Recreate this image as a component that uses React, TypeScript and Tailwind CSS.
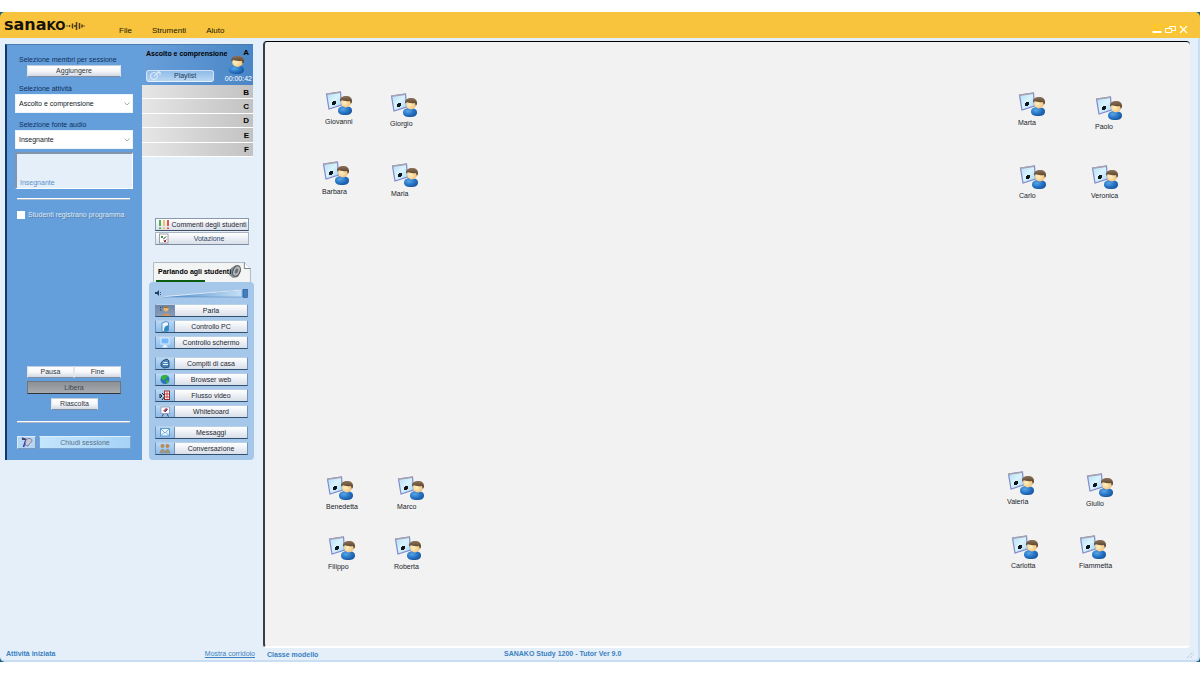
import { useState, type ReactNode } from "react";

const students = [
  { name: "Giovanni", x: 60, y: 49 },
  { name: "Giorgio", x: 125, y: 51 },
  { name: "Barbara", x: 57, y: 119 },
  { name: "Maria", x: 126, y: 121 },
  { name: "Marta", x: 753, y: 50 },
  { name: "Paolo", x: 830, y: 54 },
  { name: "Carlo", x: 754, y: 123 },
  { name: "Veronica", x: 826, y: 123 },
  { name: "Benedetta", x: 61, y: 434 },
  { name: "Marco", x: 132, y: 434 },
  { name: "Filippo", x: 63, y: 494 },
  { name: "Roberta", x: 129, y: 494 },
  { name: "Valeria", x: 742, y: 429 },
  { name: "Giulio", x: 821, y: 431 },
  { name: "Carlotta", x: 746, y: 493 },
  { name: "Fiammetta", x: 814, y: 493 },
];

const glossy =
  "bg-linear-to-b from-white via-[#f6f7fa] to-[#d3d8e2] border border-t-[#c3cedd] border-x-[#dfe6ef] border-b-[#7d8ba3] text-[#2e3440]";

function Defs() {
  return (
    <svg className="absolute size-0" aria-hidden="true">
      <defs>
        <linearGradient id="screen" x1="0" y1="0" x2="1" y2="1">
          <stop offset="0" stopColor="#b4dcf5" />
          <stop offset="0.5" stopColor="#d8f3fd" />
          <stop offset="1" stopColor="#a5d3f2" />
        </linearGradient>
        <radialGradient id="shirt" cx="0.35" cy="0.35" r="0.75">
          <stop offset="0" stopColor="#5aa6e6" />
          <stop offset="0.5" stopColor="#2a78c8" />
          <stop offset="1" stopColor="#155099" />
        </radialGradient>
        <radialGradient id="face" cx="0.35" cy="0.5" r="0.7">
          <stop offset="0" stopColor="#fff0bd" />
          <stop offset="1" stopColor="#eebb78" />
        </radialGradient>
        <linearGradient id="hair" x1="0" y1="0" x2="0" y2="1">
          <stop offset="0" stopColor="#8d7358" />
          <stop offset="1" stopColor="#4b3420" />
        </linearGradient>
        <linearGradient id="slope" x1="0" y1="0" x2="1" y2="0">
          <stop offset="0" stopColor="#4a8ccd" />
          <stop offset="1" stopColor="#c6dff5" />
        </linearGradient>
      </defs>
    </svg>
  );
}

function Person() {
  return (
    <g>
      <path d="M0 14.500C0 11.500 2.500 10 7 10S14 11.500 14 14.500C14 17.800 11.500 19 7 19S0 17.800 0 14.500Z" fill="url(#shirt)" />
      <ellipse cx="8" cy="6.800" rx="5" ry="4.700" fill="url(#face)" />
      <path d="M2 4.500C2 1.500 4.500 0 8 0C12 0 14.300 2 14 5.500C13.900 6.800 13.300 7.500 12.800 7.800L12 5C8.500 5.500 5.500 5 3.800 4L2.500 5.500Z" fill="url(#hair)" />
    </g>
  );
}

function StudentIcon() {
  return (
    <svg width="28" height="26" viewBox="0 0 28 26" aria-hidden="true">
      <path d="M1.500 3L15.500 1L16.500 14L4 18Z" fill="url(#screen)" stroke="#8189cb" strokeWidth="1.200" />
      <path d="M1.200 3.200L15.500 1.200" stroke="#a6a3b0" strokeWidth="1.500" />
      <path d="M7 11h1V10h3v3h-1v1H7z" fill="#10151c" />
      <g transform="translate(13 5)">
        <Person />
      </g>
    </svg>
  );
}

function Glyph({ children }: { children: ReactNode }) {
  return (
    <svg width="12" height="11" viewBox="0 0 12 11" fill="none" aria-hidden="true">
      {children}
    </svg>
  );
}

const talkGlyph = (
  <Glyph>
    <path d="M1 2l1 1M3.500 1.500l.5 1M1 5h1.500" stroke="#26384f" />
    <circle cx="7" cy="4" r="2.500" fill="#e9b56b" />
    <path d="M3.500 11C4 7.500 10 7.500 11 11Z" fill="#d4945a" />
    <path d="M5 3C5 .5 9 .5 9.500 3Z" fill="#a8682b" />
  </Glyph>
);
const pcGlyph = (
  <Glyph>
    <path d="M3 2l4-1.500 2.500 1v8L6 11l-3-1z" fill="#e8f6ff" stroke="#3f7fb4" strokeWidth=".8" />
    <path d="M5 9.500C5 6 6.500 5 9.500 4v5.500L6 11z" fill="#3186c4" />
  </Glyph>
);
const screenGlyph = (
  <Glyph>
    <rect x="2" y="1" width="8" height="6" fill="#74b7ff" stroke="#d9efff" />
    <path d="M5 8h2l2 2.500H3z" fill="#e8f5ff" />
  </Glyph>
);
const homeworkGlyph = (
  <Glyph>
    <path d="M4 2.500L8 1l2 2v6L5 10 2 8V5z" fill="#4c88bd" stroke="#173a60" strokeWidth=".8" />
    <path d="M4.500 4.500h4M4 6.500h5" stroke="#e9f5ff" />
  </Glyph>
);
const globeGlyph = (
  <Glyph>
    <circle cx="6" cy="5.500" r="4.500" fill="#2c73b9" />
    <path d="M3 2C5 .5 8 1 9 2.500L7 4 6 6 3 5.500 2 4ZM6.500 7l3-1c.5 1-.5 3-2 3.800z" fill="#31b534" />
  </Glyph>
);
const videoGlyph = (
  <Glyph>
    <path d="M1 4v4l2-2zM3 3l3 3-3 4" stroke="#20242c" />
    <rect x="5.500" y="1" width="5" height="8.500" fill="#fff" stroke="#9a2b2b" />
    <path d="M8 1.500v7M6 4h4M6 7h4" stroke="#b94646" />
  </Glyph>
);
const boardGlyph = (
  <Glyph>
    <rect x="2" y="1" width="8.500" height="6.500" fill="#fff" stroke="#8c96ad" strokeWidth=".8" />
    <path d="M4 5l3-3 2 1-3 3z" fill="#c93645" />
    <path d="M6 6l2.500-2.500" stroke="#244bac" />
    <path d="M4.500 8L3 10.500M8 8l1.500 2.500" stroke="#434b60" />
  </Glyph>
);
const mailGlyph = (
  <Glyph>
    <rect x="1.500" y="1.500" width="9" height="7.500" fill="#e8f6ff" stroke="#5e9bcb" />
    <path d="M2 2l4 4 4-4M2 8.500l3-3M10 8.500l-3-3" stroke="#5e9bcb" strokeWidth=".8" />
  </Glyph>
);
const chatGlyph = (
  <Glyph>
    <circle cx="3.500" cy="3" r="2" fill="#b98b58" />
    <circle cx="8.500" cy="3" r="2" fill="#b98b58" />
    <path d="M1 10C1 5 6 5 6 10ZM6 10C6 5 11 5 11 10Z" fill="#ad946f" stroke="#6f93b5" strokeWidth=".5" />
  </Glyph>
);

const toolGroups = [
  [
    { label: "Parla", icon: talkGlyph, active: true },
    { label: "Controllo PC", icon: pcGlyph },
    { label: "Controllo schermo", icon: screenGlyph },
  ],
  [
    { label: "Compiti di casa", icon: homeworkGlyph },
    { label: "Browser web", icon: globeGlyph },
    { label: "Flusso video", icon: videoGlyph },
    { label: "Whiteboard", icon: boardGlyph },
  ],
  [
    { label: "Messaggi", icon: mailGlyph },
    { label: "Conversazione", icon: chatGlyph },
  ],
];

function ToolButton({ label, icon, active }: { label: string; icon: ReactNode; active?: boolean }) {
  return (
    <button className="flex h-[13px] w-full border border-t-[#b9cfe8] border-x-[#6f93bb] border-b-[#33506f] text-[#1f2733]">
      <span
        className={
          active
            ? "flex h-full w-[18px] items-center justify-center bg-linear-to-b from-[#6a87ab] to-[#8d9cb2]"
            : "flex h-full w-[18px] items-center justify-center bg-linear-to-b from-[#b9d8f5] to-[#8fbce8]"
        }
      >
        {icon}
      </span>
      <span className="flex h-full flex-1 items-center justify-center border-l border-[#7393b8] bg-linear-to-b from-white to-[#d9dfe9] whitespace-nowrap">
        {label}
      </span>
    </button>
  );
}

function Picker({ id, label, options }: { id: string; label: string; options: string[] }) {
  return (
    <div className="flex flex-col">
      <label htmlFor={id} className="ml-1 text-[#0f2f5c]">
        {label}
      </label>
      <div className="relative mt-px">
        <select id={id} className="h-[19px] w-full appearance-none border border-[#eef4fb] bg-white pl-[3px] text-[#15181d]">
          {options.map((o) => (
            <option key={o}>{o}</option>
          ))}
        </select>
        <svg className="pointer-events-none absolute top-2 right-[3px]" width="6" height="4" viewBox="0 0 6 4" fill="none" aria-hidden="true">
          <path d="M.5.5L3 3 5.500.5" stroke="#9a9a9a" strokeWidth=".8" />
        </svg>
      </div>
    </div>
  );
}

function Divider() {
  return <hr className="mr-[3px] ml-[2px] h-[2px] border-0 border-b border-[#a9b9c9] bg-white" />;
}

function SessionPanel() {
  const [record, setRecord] = useState(false);
  return (
    <section className="flex w-[137px] shrink-0 flex-col border-t border-l-2 border-t-[#4c7cb0] border-l-[#12386b] bg-[#659fdb] pt-[11px] pr-[9px] pb-[11px] pl-2">
      <div className="ml-1 text-[#0f2f5c]">Selezione membri per sessione</div>
      <button className={`mt-px ml-3 h-3 w-[94px] ${glossy}`}>Aggiungere</button>
      <div className="mt-2">
        <Picker id="activity" label="Selezione attività" options={["Ascolto e comprensione"]} />
      </div>
      <div className="mt-2">
        <Picker id="source" label="Selezione fonte audio" options={["Insegnante"]} />
      </div>
      <div className="mt-[3px] flex h-[37px] items-end border-t-2 border-r border-b border-l-2 border-t-[#8195ad] border-r-white border-b-white border-l-[#8195ad] bg-[#e4effa] pb-px pl-[3px] text-[#5b91ca]">
        Insegnante
      </div>
      <div className="mt-[9px]">
        <Divider />
      </div>
      <label className="mt-[11px] ml-[2px] flex items-center gap-[3px] text-[#dce9f7] text-shadow-[1px_1px_0_#5c7ea6]">
        <input
          type="checkbox"
          checked={record}
          onChange={() => setRecord(!record)}
          className="size-2 appearance-none bg-white checked:bg-[#12386b]"
        />
        Studenti registrano programma
      </label>
      <div className="mt-[147px] ml-3 flex w-[94px]">
        <button className={`h-3 flex-1 ${glossy}`}>Pausa</button>
        <button className={`h-3 flex-1 ${glossy}`}>Fine</button>
      </div>
      <button className="mt-[3px] ml-3 h-[13px] w-[94px] border border-[#6e7680] border-b-[#30343a] bg-linear-to-b from-[#8d9094] to-[#a7abb0] text-[#41464d]">
        Libera
      </button>
      <button className={`mt-1 ml-9 h-3 w-[47px] ${glossy}`}>Riascolta</button>
      <div className="mt-[11px]">
        <Divider />
      </div>
      <div className="mt-[13px] mr-[2px] ml-[2px] flex gap-[3px]">
        <button aria-label="Guida" className="flex h-[13px] w-[19px] items-center justify-center border border-[#7d97b4] border-t-[#dbeafa] border-l-[#dbeafa] bg-[#b5d7f5]">
          <Glyph>
            <path d="M1 1l4 1.500L2.500 10" stroke="#2b3aa4" strokeWidth="1.500" />
            <path d="M5 3c1-2 5-2 6 0 0 3-3 3-4 6L4 8z" fill="#c8c9d4" stroke="#6d6d92" strokeWidth=".8" />
            <path d="M1 1h3v2H1z" fill="#4c4c52" />
          </Glyph>
        </button>
        <button className="h-[13px] flex-1 border border-[#7da5cb] border-t-[#dcefff] bg-linear-to-r from-[#c4e6fd] to-[#a5d2f5] text-[#5a6f86]">
          Chiudi sessione
        </button>
      </div>
    </section>
  );
}

function SessionList() {
  return (
    <div>
      <div className="flex h-[41px] justify-between border-t border-t-[#4c7cb0] bg-linear-to-r from-[#689fdb] to-[#4a86c5] pl-1">
        <div className="flex w-[68px] flex-col pt-[5px]">
          <div className="font-bold whitespace-nowrap text-black">Ascolto e comprensione</div>
          <button className="mt-3 flex h-3 w-full items-center rounded-[3px] border border-[#cfe2f7] border-b-[#e7f1fb] bg-linear-to-b from-[#8fbbe8] to-[#b9d6f2] pl-[3px] text-[#203a59]">
            <svg width="12" height="10" viewBox="0 0 12 10" fill="none" aria-hidden="true">
              <circle cx="4" cy="5" r="3.500" stroke="#dfedfb" />
              <path d="M4 5l5-4M7 1h3v3" stroke="#e9f3fd" />
            </svg>
            <span className="ml-3">Playlist</span>
          </button>
        </div>
        <div className="relative flex w-[30px] flex-col pt-1">
          <div className="pr-1 text-right text-[8px] font-bold text-black">A</div>
          <svg className="absolute top-[11px] left-[6px]" width="16" height="18" viewBox="0 0 15 19" preserveAspectRatio="none" aria-hidden="true">
            <Person />
          </svg>
          <div className="mt-[18px] pr-px text-right text-white">00:00:42</div>
        </div>
      </div>
      <ul className="grid h-[72px] grid-rows-5 font-bold text-black">
        {["B", "C", "D", "E", "F"].map((l) => (
          <li key={l} className="flex items-center justify-end border-b border-white bg-linear-to-r from-[#e6e6e6] to-[#c2c2c2] pt-[2px] pr-1 text-[8px]">
            {l}
          </li>
        ))}
      </ul>
    </div>
  );
}

function Sidebar() {
  return (
    <aside className="flex w-[250px] shrink-0 self-start">
      <SessionPanel />
      <div className="flex min-w-0 flex-1 flex-col">
        <div className="mr-[2px]">
          <SessionList />
        </div>
        <div className="mt-[61px] mr-[6px] ml-[13px] flex flex-col gap-px">
          <button className="flex h-[13px] items-center border border-[#8a98ad] border-b-[#3f4d63] bg-linear-to-b from-white to-[#d9dfe9] pl-[2px] text-[#1f2733]">
            <Glyph>
              <path d="M2 1v6M2 8.500V10" stroke="#159a2f" strokeWidth="1.500" />
              <path d="M6 1v6M6 8.500V10" stroke="#f0b524" strokeWidth="1.500" />
              <path d="M10 1v6M10 8.500V10" stroke="#e21f1f" strokeWidth="1.500" />
            </Glyph>
            <span className="flex-1 whitespace-nowrap">Commenti degli studenti</span>
          </button>
          <button className="flex h-[13px] items-center border border-[#a9b4c4] border-b-[#7d8ba3] bg-linear-to-b from-white to-[#d9dfe9] pl-[2px] text-[#2f4766]">
            <Glyph>
              <rect x="1.500" y="1" width="8.500" height="9" fill="#fff" stroke="#7a808a" strokeWidth=".7" />
              <path d="M3 3l2 2M5 3L3 5" stroke="#3a9b45" />
              <path d="M8 3.500L5.500 6" stroke="#1b1b1b" />
              <path d="M5.500 7l2.500 2M8.500 6.500L6 9" stroke="#9c2424" />
            </Glyph>
            <span className="flex-1">Votazione</span>
          </button>
        </div>
        <div className="relative mt-[17px] mr-[4px] ml-[11px] flex h-5 flex-col justify-end">
          <svg className="absolute inset-0 h-full w-full" viewBox="0 0 96 20" preserveAspectRatio="none" aria-hidden="true">
            <path d="M.5 20V.500H89.500L95.500 6.500V20" fill="#f3f4f4" stroke="#a4abb4" strokeWidth=".8" />
            <path d="M89.500.500V6.500H95.500" fill="#fff" stroke="#5f6771" strokeWidth=".8" />
          </svg>
          <svg className="absolute top-[2px] right-[9px]" width="14" height="15" viewBox="0 0 14 15" aria-hidden="true">
            <path d="M1 11L3 4 8 1l4 1 1 5-3 6-5 1z" fill="#8b8f92" />
            <ellipse cx="8.500" cy="7" rx="3.500" ry="5.500" transform="rotate(22 8.500 7)" fill="#b4b8ba" stroke="#4b4e51" />
            <ellipse cx="8.500" cy="7" rx="1.500" ry="2.700" transform="rotate(22 8.500 7)" fill="#6b6e71" />
          </svg>
          <div className="relative pl-[5px] font-bold whitespace-nowrap text-black">Parlando agli studenti</div>
          <div className="relative mt-1 ml-[3px] h-[2px] w-[49px] bg-[#0a5c12]" />
        </div>
        <div className="mr-px ml-[7px] flex flex-col rounded-[4px] bg-[#a5c8ea] px-[6px] pt-[7px] pb-[5px]">
          <div className="flex h-[11px] items-start">
            <svg width="8" height="8" viewBox="0 0 8 8" aria-hidden="true">
              <path d="M0 3h2l2-2v6L2 5H0z" fill="#1f4168" />
              <path d="M5.500 3v.8M5.500 5.200v.8" stroke="#1f4168" />
            </svg>
            <svg className="h-[9px] flex-1" viewBox="0 0 85 9" preserveAspectRatio="none" aria-label="Volume" role="img">
              <path d="M2 8L79 1V8Z" fill="url(#slope)" stroke="#5d8fc4" strokeWidth=".6" />
              <path d="M2 7.500L79 1" stroke="#f2f8fe" strokeWidth=".8" />
              <rect x="80" y="0" width="4.500" height="8.500" fill="#3f7dc0" stroke="#23588f" strokeWidth=".6" />
            </svg>
          </div>
          <div className="mt-1 flex flex-col gap-2">
            {toolGroups.map((group, i) => (
              <div key={i} className="flex flex-col gap-[3px]">
                {group.map((t) => (
                  <ToolButton key={t.label} {...t} />
                ))}
              </div>
            ))}
          </div>
        </div>
      </div>
    </aside>
  );
}

function TitleBar() {
  return (
    <header className="flex h-[26px] shrink-0 items-start rounded-t-[5px] bg-[#f8c33d] px-1">
      <div className="flex w-[103px] items-center pt-[5px] font-['DejaVu_Sans'] leading-4 font-bold text-[#15130c]">
        <div className="flex items-baseline">
          <span className="text-[16px]">sana</span>
          <span className="text-[12px]">KO</span>
        </div>
        <svg className="ml-px" width="19" height="10" viewBox="0 0 19 10" fill="none" stroke="#4a3a12" aria-hidden="true">
          <path d="M.5 5h1M3.500 4v2M6.500 2.500v5" strokeWidth="1.500" />
          <path d="M8 5h2.500M10.500 1v8" strokeWidth="1.500" />
          <path d="M13.500 2v6M16 3.500v3M18 4.500v1" strokeWidth="1.500" />
        </svg>
      </div>
      <nav className="flex flex-1 gap-5 pt-[14px] pl-3 text-[8px] leading-[10px] text-[#1c1808]">
        <button>File</button>
        <button>Strumenti</button>
        <button>Aiuto</button>
      </nav>
      <div className="flex gap-[3px] pt-[12px] pr-2">
        <button aria-label="Riduci a icona" className="bg-[#fdc62d]">
          <svg width="10" height="11" viewBox="0 0 10 11" aria-hidden="true">
            <path d="M.5 8h9" stroke="#fff" strokeWidth="2" />
          </svg>
        </button>
        <button aria-label="Ripristina" className="bg-[#fdc62d]">
          <svg width="11" height="11" viewBox="0 0 11 11" fill="none" stroke="#fff" aria-hidden="true">
            <path d="M4.500 4V2.500h6v4H7M.5 4.500h6v4h-6z" />
          </svg>
        </button>
        <button aria-label="Chiudi" className="bg-[#fdc62d]">
          <svg width="9" height="11" viewBox="0 0 9 11" stroke="#fff" strokeWidth="1.200" aria-hidden="true">
            <path d="M1 2l7 7M8 2L1 9" />
          </svg>
        </button>
      </div>
    </header>
  );
}

export default function App() {
  return (
    <div className="flex min-h-screen flex-col bg-white pt-3 pb-[13px] font-['Liberation_Sans',sans-serif] text-[7px] leading-[8px]">
      <Defs />
      <div className="flex flex-1 flex-col bg-[#12627e]">
        <TitleBar />
        <div className="flex flex-1 flex-col rounded-b-[5px] border-r-2 border-b-2 border-[#c9def3] bg-[#e4effa]">
          <div className="flex flex-1 pt-[3px] pr-2 pl-[5px]">
            <div className="flex pt-[3px]">
              <Sidebar />
            </div>
            <main className="relative ml-2 min-h-[560px] flex-1 rounded-[4px] border-t border-b-2 border-l-2 border-t-black border-b-white border-l-[#3b3e47] bg-[#f2f2f2]">
              {students.map((s) => (
                <figure key={s.name} className="absolute" style={{ left: s.x, top: s.y }}>
                  <StudentIcon />
                  <figcaption className="mt-px text-[#20242b]">{s.name}</figcaption>
                </figure>
              ))}
            </main>
          </div>
          <footer className="flex h-[12px] shrink-0 items-center pr-1 pl-[6px] font-bold text-[#3a7fbf]">
            <div className="flex w-[249px] justify-between">
              <span>Attività iniziata</span>
              <a href="#corridoio" className="font-normal underline">
                Mostra corridoio
              </a>
            </div>
            <div className="w-[237px] pt-[2px] pl-3">Classe modello</div>
            <div className="flex-1 pl-3">SANAKO Study 1200 - Tutor Ver 9.0</div>
            <svg width="8" height="8" viewBox="0 0 8 8" stroke="#9dbddc" strokeDasharray="1 1" aria-hidden="true">
              <path d="M1 8L8 1M4 8L8 4" />
            </svg>
          </footer>
        </div>
      </div>
    </div>
  );
}
